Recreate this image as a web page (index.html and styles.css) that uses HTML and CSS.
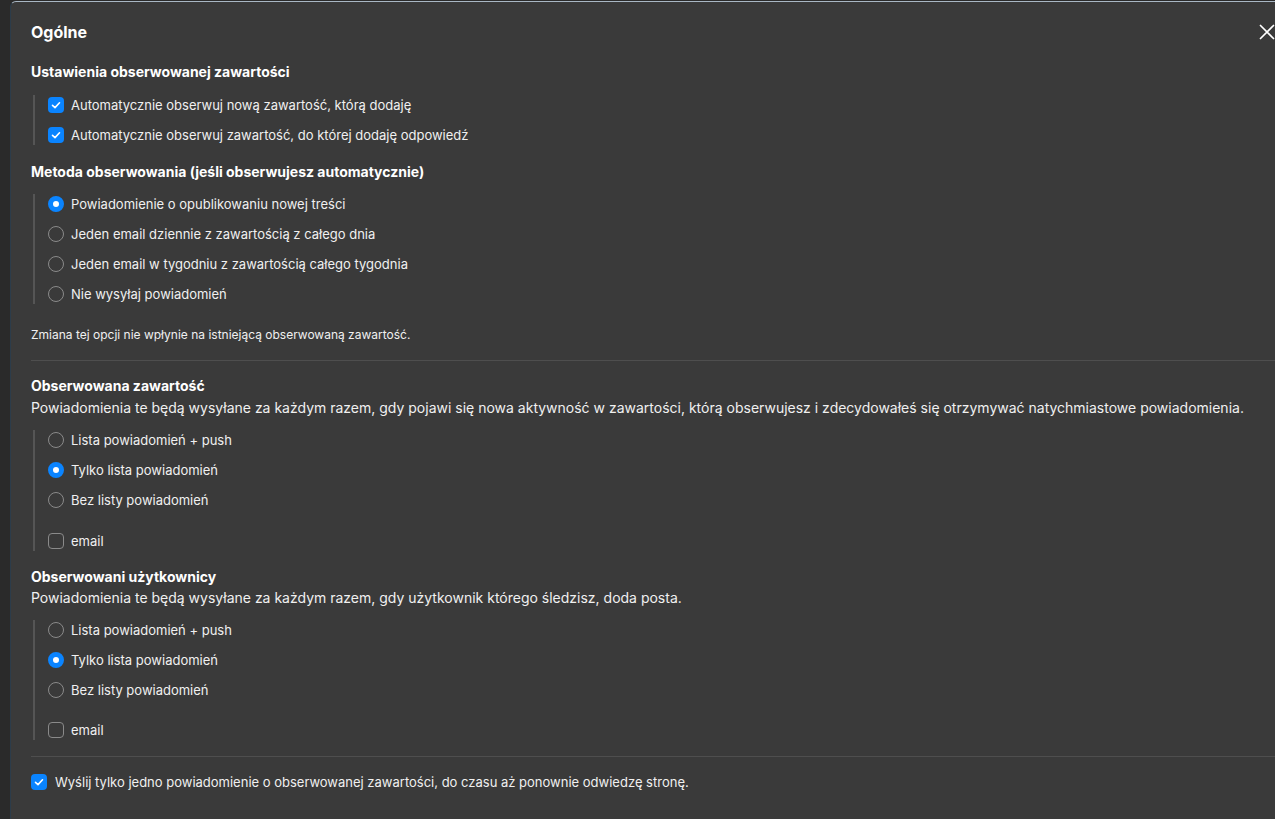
FILE: index.html
```html
<!DOCTYPE html>
<html lang="pl">
<head>
    <meta charset="UTF-8">
    <meta name="viewport" content="width=device-width, initial-scale=1.0">
    <title>Ogólne - ustawienia powiadomień</title>
    <link rel="stylesheet" href="styles.css">
</head>
<body>
    <div class="modal">
        <span class="close">
            <svg width="16" height="16" viewBox="0 0 16 16"><path d="M1.5 1.5 L14.5 14.5 M14.5 1.5 L1.5 14.5" stroke="#fff" stroke-width="1.7" stroke-linecap="round"/></svg>
        </span>
        <h2 class="modal-title">Ogólne</h2>

        <h3 class="section-title">Ustawienia obserwowanej zawartości</h3>
        <div class="group group-first">
            <label class="option"><span class="box checked"><svg viewBox="0 0 16 16"><path d="M4.5 8.3 L7 10.6 L11.5 5.8" /></svg></span>Automatycznie obserwuj nową zawartość, którą dodaję</label>
            <label class="option"><span class="box checked"><svg viewBox="0 0 16 16"><path d="M4.5 8.3 L7 10.6 L11.5 5.8" /></svg></span>Automatycznie obserwuj zawartość, do której dodaję odpowiedź</label>
        </div>

        <h3 class="section-title method-title">Metoda obserwowania (jeśli obserwujesz automatycznie)</h3>
        <div class="group group-method">
            <label class="option"><span class="radio checked"></span>Powiadomienie o opublikowaniu nowej treści</label>
            <label class="option"><span class="radio"></span>Jeden email dziennie z zawartością z całego dnia</label>
            <label class="option"><span class="radio"></span>Jeden email w tygodniu z zawartością całego tygodnia</label>
            <label class="option"><span class="radio"></span>Nie wysyłaj powiadomień</label>
        </div>
        <p class="note">Zmiana tej opcji nie wpłynie na istniejącą obserwowaną zawartość.</p>

        <hr class="divider">

        <h3 class="section-title block-title">Obserwowana zawartość</h3>
        <p class="desc">Powiadomienia te będą wysyłane za każdym razem, gdy pojawi się nowa aktywność w zawartości, którą obserwujesz i zdecydowałeś się otrzymywać natychmiastowe powiadomienia.</p>
        <div class="group group-notify">
            <label class="option"><span class="radio"></span>Lista powiadomień + push</label>
            <label class="option"><span class="radio checked"></span>Tylko lista powiadomień</label>
            <label class="option"><span class="radio"></span>Bez listy powiadomień</label>
            <label class="option option-email option-email-first"><span class="box"></span>email</label>
        </div>

        <h3 class="section-title block-title users-title">Obserwowani użytkownicy</h3>
        <p class="desc desc-users">Powiadomienia te będą wysyłane za każdym razem, gdy użytkownik którego śledzisz, doda posta.</p>
        <div class="group group-notify">
            <label class="option"><span class="radio"></span>Lista powiadomień + push</label>
            <label class="option"><span class="radio checked"></span>Tylko lista powiadomień</label>
            <label class="option"><span class="radio"></span>Bez listy powiadomień</label>
            <label class="option option-email"><span class="box"></span>email</label>
        </div>

        <hr class="divider divider-bottom">

        <label class="option option-single"><span class="box checked"><svg viewBox="0 0 16 16"><path d="M4.5 8.3 L7 10.6 L11.5 5.8" /></svg></span>Wyślij tylko jedno powiadomienie o obserwowanej zawartości, do czasu aż ponownie odwiedzę stronę.</label>
    </div>
</body>
</html>
```

FILE: styles.css
```css
html, body {
    margin: 0;
    padding: 0;
    height: 100%;
    overflow: hidden;
}
body {
    font-family: Inter, "Noto Sans", sans-serif;
    background-color: #2a2a2a;
    color: #ececec;
}
.modal {
    position: relative;
    box-sizing: border-box;
    width: 1320px;
    height: calc(100% - 1px);
    margin: 1px 0 0 10px;
    padding: 18px 20px 0 20px;
    background-color: #3a3a3a;
    border-top: 1px solid #a9b7c4;
    border-left: 1px solid #2c3c4a;
    border-radius: 6px 0 0 0;
}
.close {
    position: absolute;
    top: 22px;
    left: 1248px;
    width: 16px;
    height: 16px;
}
.close svg {
    display: block;
}
.modal-title {
    margin: 0;
    font-size: 16px;
    line-height: 24px;
    font-weight: 700;
    color: #fff;
}
.section-title {
    margin: 18px 0 0 0;
    font-size: 14px;
    line-height: 20px;
    font-weight: 700;
    color: #fff;
}
.method-title {
    margin-top: 17px;
}
.block-title {
    margin-top: 15px;
}
.users-title {
    margin-top: 16px;
}
.group {
    display: flex;
    flex-direction: column;
    gap: 10px;
    margin-left: 2px;
    padding-left: 13px;
    border-left: 2px solid #555;
}
.group-first {
    margin-top: 13px;
}
.group-method {
    margin-top: 12px;
}
.group-notify {
    margin-top: 12px;
}
.option {
    display: flex;
    align-items: center;
    gap: 7px;
    height: 20px;
    font-size: 13px;
    color: #f0f0f0;
}
.option-email {
    margin-top: 10px;
}
.option-email-first {
    margin-top: 11px;
}
.option-single {
    margin-top: 15px;
    gap: 8px;
}
.box, .radio {
    box-sizing: border-box;
    flex: none;
    width: 16px;
    height: 16px;
    border: 1.5px solid #8a8a8a;
}
.box {
    border-radius: 4px;
}
.box.checked {
    border: none;
    background-color: #0a84ff;
}
.box svg {
    display: block;
    width: 16px;
    height: 16px;
    fill: none;
    stroke: #fff;
    stroke-width: 1.6;
    stroke-linecap: round;
    stroke-linejoin: round;
}
.radio {
    border-radius: 50%;
}
.radio.checked {
    border: 5px solid #0a84ff;
    background-color: #fff;
}
.note {
    margin: 23px 0 0 0;
    font-size: 12px;
    line-height: 16px;
    color: #f0f0f0;
}
.divider {
    margin: 17px 0 0 0;
    border: none;
    border-top: 1px solid #4e4e4e;
}
.divider-bottom {
    margin-top: 16px;
}
.desc {
    margin: 2px 0 0 0;
    font-size: 14px;
    line-height: 20px;
    color: #f0f0f0;
}
.desc-users {
    margin-top: 1px;
}
```
